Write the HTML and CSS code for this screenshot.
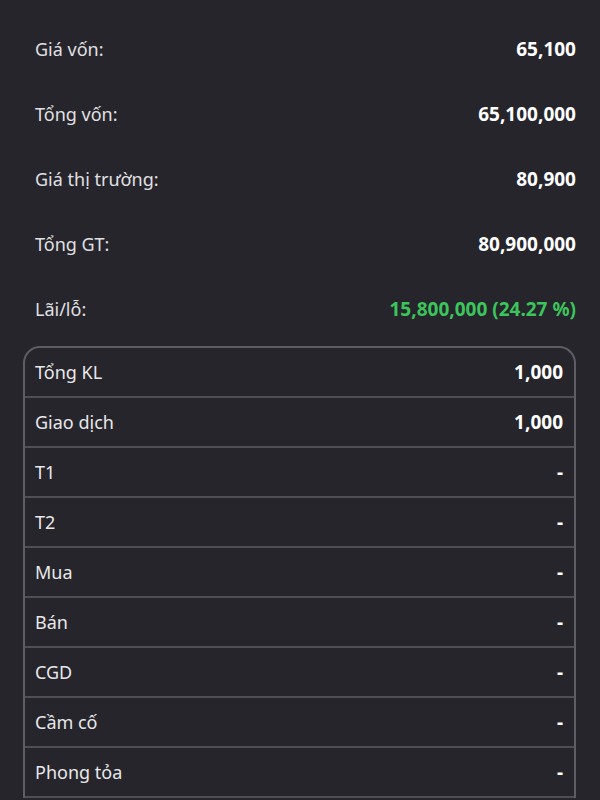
FILE: index.html
```html
<!DOCTYPE html>
<html lang="vi">
<head>
<meta charset="utf-8">
<link rel="stylesheet" href="styles.css">
</head>
<body>
<div class="page">
  <div class="summary">
    <div class="srow"><span class="label">Giá vốn:</span><span class="value">65,100</span></div>
    <div class="srow"><span class="label">Tổng vốn:</span><span class="value">65,100,000</span></div>
    <div class="srow"><span class="label">Giá thị trường:</span><span class="value">80,900</span></div>
    <div class="srow"><span class="label">Tổng GT:</span><span class="value">80,900,000</span></div>
    <div class="srow"><span class="label">Lãi/lỗ:</span><span class="value up">15,800,000 (24.27 %)</span></div>
  </div>
  <div class="table">
    <div class="trow"><span class="label">Tổng KL</span><span class="value">1,000</span></div>
    <div class="trow"><span class="label">Giao dịch</span><span class="value">1,000</span></div>
    <div class="trow"><span class="label">T1</span><span class="value">-</span></div>
    <div class="trow"><span class="label">T2</span><span class="value">-</span></div>
    <div class="trow"><span class="label">Mua</span><span class="value">-</span></div>
    <div class="trow"><span class="label">Bán</span><span class="value">-</span></div>
    <div class="trow"><span class="label">CGD</span><span class="value">-</span></div>
    <div class="trow"><span class="label">Cầm cố</span><span class="value">-</span></div>
    <div class="trow"><span class="label">Phong tỏa</span><span class="value">-</span></div>
  </div>
</div>
</body>
</html>
```

FILE: styles.css
```css
html, body {
  margin: 0;
  padding: 0;
  background: #26252b;
}
body {
  font-family: "Noto Sans", "Open Sans", sans-serif;
  font-size: 19px;
  color: #e0e0e3;
}
.page {
  padding: 16px 24px 0 23px;
}
.summary {
  display: flex;
  flex-direction: column;
  margin-bottom: 5px;
}
.srow {
  height: 65px;
  display: flex;
  align-items: center;
  justify-content: space-between;
  padding-left: 12px;
}
.label {
  font-size: 18px;
}
.value {
  font-weight: 700;
  color: #ffffff;
}
.value.up {
  color: #3cc55c;
}
.table {
  border: 2px solid #5e5d63;
  border-bottom: none;
  border-radius: 17px 17px 0 0;
  overflow: hidden;
}
.trow {
  height: 48px;
  display: flex;
  align-items: center;
  justify-content: space-between;
  padding: 0 11px 0 10px;
  border-bottom: 2px solid #4f4e54;
}
.trow .label {
  color: #e8e8ea;
}
```
